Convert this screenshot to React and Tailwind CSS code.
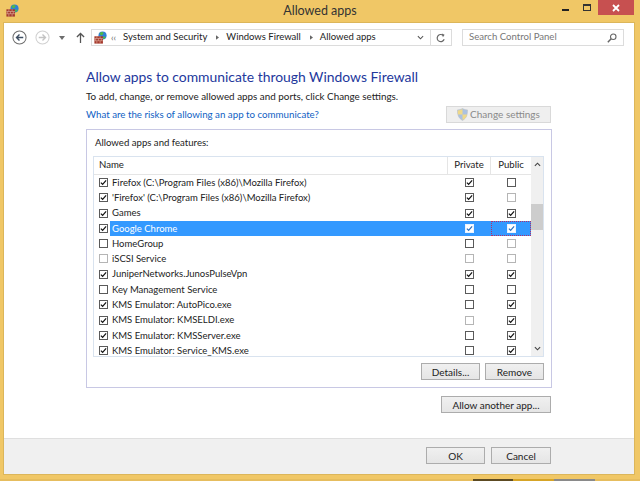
import React from "react";

const rows = [
  { name: "Firefox (C:\\Program Files (x86)\\Mozilla Firefox)", on: true, priv: true, pub: false },
  { name: "'Firefox' (C:\\Program Files (x86)\\Mozilla Firefox)", on: true, priv: true, pub: false, pubDim: true },
  { name: "Games", on: true, priv: true, pub: true },
  { name: "Google Chrome", on: true, priv: true, pub: true, selected: true },
  { name: "HomeGroup", on: false, priv: false, pub: false, pubDim: true },
  { name: "iSCSI Service", on: false, onDim: true, priv: false, privDim: true, pub: false, pubDim: true },
  { name: "JuniperNetworks.JunosPulseVpn", on: true, priv: true, pub: true },
  { name: "Key Management Service", on: false, priv: false, pub: false },
  { name: "KMS Emulator: AutoPico.exe", on: true, priv: false, pub: true },
  { name: "KMS Emulator: KMSELDI.exe", on: true, priv: false, privDim: true, pub: true },
  { name: "KMS Emulator: KMSServer.exe", on: true, priv: false, pub: true },
  { name: "KMS Emulator: Service_KMS.exe", on: true, priv: false, pub: true },
];

const FirewallIcon = ({ className }) => (
  <svg viewBox="0 0 16 16" className={className}>
    <circle cx="10.5" cy="5.5" r="5" fill="#2f80d8" />
    <path d="M7 2.5c2-2 4-1.500 5 0-1 1.500-1 2.500-3 3-1-1-2-1-2-3z" fill="#4fb848" />
    <path d="M11 7c1.500-.5 2.500 0 3.500.5-.5 1-1.500 2-3 2.500z" fill="#4fb848" />
    <rect x="0.500" y="6.500" width="10.500" height="9" fill="#a5392c" />
    <path d="M0.500 9.200h10.500M0.500 12h10.500M3.500 6.500v2.700M7.500 6.500v2.700M2 9.200V12M5.500 9.200V12M9 9.200V12M3.500 12v3.500M7.500 12v3.500" stroke="#e3b9a8" strokeWidth="0.700" fill="none" />
  </svg>
);

const ShieldIcon = () => (
  <svg viewBox="0 0 12 14" className="w-[11px] h-[13px] mr-[2px] opacity-70">
    <path d="M6 0.500c1.500 1 3.500 1.500 5.500 1.500 0 5-1 9-5.500 11.500C1.500 11 0.500 7 0.500 2 2.500 2 4.500 1.500 6 0.500z" fill="#8fb0dc" stroke="#a8a8a8" strokeWidth="0.500" />
    <path d="M6 1v6H1c0-1.500-.2-3-.2-4.500C2.800 2.500 4.500 2 6 1zM6 7h5c-.5 2.500-2 4.500-5 6z" fill="#f0d060" />
  </svg>
);

const Check = ({ on, dim, white, bg }) => (
  <span
    className={`inline-flex items-center justify-center w-[9px] h-[9px] border ${
      dim ? "border-[#b5b5b5]" : white ? "border-[#eaf3ff]" : "border-[#5a5a5a]"
    } ${bg}`}
  >
    {on && (
      <svg viewBox="0 0 8 8" className="w-[7px] h-[7px]">
        <path d="M1 4.200l2 2 4-4.700" fill="none" stroke={white ? "#2a6fc0" : "#111"} strokeWidth="1.400" />
      </svg>
    )}
  </span>
);

const Btn = ({ children, className = "", disabled }) => (
  <button
    className={`h-[17px] flex items-center justify-center border text-[10px] leading-none whitespace-nowrap ${
      disabled
        ? "border-[#d9d9d9] bg-[#efefef] text-[#8a8a8a]"
        : "border-[#acacac] bg-gradient-to-b from-[#f0f0f0] to-[#e5e5e5] text-[#222]"
    } ${className}`}
  >
    {children}
  </button>
);

const App = () => {
  return (
    <div className="w-[640px] h-[481px] overflow-hidden flex flex-col bg-[#f0c766] font-['Lato','Open_Sans',sans-serif] text-[#222]">
      {/* Title bar */}
      <div className="h-[23px] relative flex items-start shrink-0">
        <FirewallIcon className="w-[13px] h-[13px] ml-[6px] mt-[4px]" />
        <div className="absolute left-0 right-0 top-[1px] text-center text-[12.500px] leading-[20px] text-[#333]">
          Allowed apps
        </div>
        <div className="ml-auto mr-[6px] flex items-start">
          <div className="w-[22px] h-[15px] flex items-end justify-center pb-[4px]">
            <div className="w-[7px] h-[2px] bg-[#222]" />
          </div>
          <div className="w-[22px] h-[15px] flex justify-center pt-[4px]">
            <div className="w-[8px] h-[7px] border border-[#333] border-t-2" />
          </div>
          <div className="w-[36px] h-[15px] bg-[#c75050] flex items-center justify-center">
            <svg viewBox="0 0 8 8" className="w-[8px] h-[8px]">
              <path d="M1 1l6 6M7 1l-6 6" stroke="#fff" strokeWidth="1.800" />
            </svg>
          </div>
        </div>
      </div>

      {/* Window body */}
      <div className="ml-[4px] mr-[6px] h-[451px] shrink-0 bg-white flex flex-col outline outline-[#dcb65a]">
        {/* Nav bar */}
        <div className="h-[17px] mt-[6px] flex items-center shrink-0">
          <svg viewBox="0 0 16 16" className="w-[15px] h-[15px] ml-[8px]">
            <circle cx="8" cy="8" r="7" fill="#fff" stroke="#6e6e6e" strokeWidth="1.100" />
            <path d="M12 8H5M8 4.800L4.800 8 8 11.200" fill="none" stroke="#3f4f63" strokeWidth="1.500" />
          </svg>
          <svg viewBox="0 0 16 16" className="w-[15px] h-[15px] ml-[8px]">
            <circle cx="8" cy="8" r="7" fill="#fff" stroke="#d0d0d0" strokeWidth="1.100" />
            <path d="M4 8h7M8 4.800L11.200 8 8 11.200" fill="none" stroke="#c4c4c4" strokeWidth="1.500" />
          </svg>
          <svg viewBox="0 0 6 4" className="w-[6px] h-[4px] ml-[9px]">
            <path d="M0 0h6L3 4z" fill="#6d6d6d" />
          </svg>
          <svg viewBox="0 0 10 12" className="w-[9px] h-[11px] ml-[11px]">
            <path d="M5 12V1.500M1 5.500L5 1.500l4 4" fill="none" stroke="#555" strokeWidth="1.400" />
          </svg>
          {/* Address box */}
          <div className="ml-[6px] w-[361px] h-[17px] border border-[#dcdcdc] flex items-center text-[9.500px]">
            <FirewallIcon className="w-[13px] h-[13px] ml-[2px] shrink-0" />
            <span className="ml-[4px] text-[#666] text-[9px] leading-none">‹‹</span>
            <span className="ml-[7px] whitespace-nowrap">System and Security</span>
            <svg viewBox="0 0 4 6" className="w-[3px] h-[5px] ml-[9px] shrink-0"><path d="M0 0l4 3-4 3z" fill="#666" /></svg>
            <span className="ml-[7px] whitespace-nowrap">Windows Firewall</span>
            <svg viewBox="0 0 4 6" className="w-[3px] h-[5px] ml-[9px] shrink-0"><path d="M0 0l4 3-4 3z" fill="#666" /></svg>
            <span className="ml-[7px] whitespace-nowrap">Allowed apps</span>
            <svg viewBox="0 0 8 5" className="w-[7px] h-[5px] ml-auto mr-[6px] shrink-0">
              <path d="M1 1l3 3 3-3" fill="none" stroke="#555" strokeWidth="1.200" />
            </svg>
            <div className="w-[21px] h-full border-l border-[#dcdcdc] flex items-center justify-center shrink-0">
              <svg viewBox="0 0 12 12" className="w-[10px] h-[10px]">
                <path d="M9.800 7.500A4.300 4.300 0 1 1 8.500 2.800" fill="none" stroke="#666" strokeWidth="1.400" />
                <path d="M7 0.500l3.300 1.500-2 3z" fill="#666" />
              </svg>
            </div>
          </div>
          {/* Search box */}
          <div className="ml-[10px] w-[162px] h-[17px] border border-[#dcdcdc] flex items-center text-[9.600px] text-[#777] pl-[6px]">
            <span>Search Control Panel</span>
            <svg viewBox="0 0 12 12" className="w-[10px] h-[10px] ml-auto mr-[6px]">
              <circle cx="7.500" cy="4.500" r="3.300" fill="none" stroke="#666" strokeWidth="1.300" />
              <path d="M5 7l-4 4" stroke="#666" strokeWidth="1.800" />
            </svg>
          </div>
        </div>

        {/* Content */}
        <div className="ml-[82px] w-[466px] flex-1 flex flex-col">
          <div className="mt-[21px] text-[13.900px] leading-[20px] text-[#23389c]">
            Allow apps to communicate through Windows Firewall
          </div>
          <div className="mt-[1px] text-[9.850px] leading-[16px]">
            To add, change, or remove allowed apps and ports, click Change settings.
          </div>
          <div className="mt-[2px] h-[17px] flex items-center justify-between">
            <span className="text-[9.730px] text-[#0f5fc4]">What are the risks of allowing an app to communicate?</span>
            <Btn disabled className="w-[105px] mr-[1px] -mt-[1px]">
              <ShieldIcon />
              Change settings
            </Btn>
          </div>

          {/* Group box */}
          <div className="mt-[6px] h-[259px] border border-[#c8c8e4] flex flex-col px-[6px]">
            <div className="mt-[5px] h-[17px] text-[9.600px] leading-[16px] pl-[2px]">Allowed apps and features:</div>
            <div className="mt-[4px] w-[451px] h-[201px] border border-[#d9e3ef] flex overflow-hidden">
              {/* List */}
              <div className="w-[437px] flex flex-col">
                <div className="h-[18px] shrink-0 flex items-center text-[9.600px] border-b border-[#e5e5e5]">
                  <div className="w-[353px] pl-[5px]">Name</div>
                  <div className="w-[43px] border-l border-[#e5e5e5] h-full flex items-center justify-center">Private</div>
                  <div className="w-[41px] border-l border-[#e5e5e5] h-full flex items-center justify-center">Public</div>
                </div>
                {rows.map((row) => (
                  <div key={row.name} className="h-[15.270px] shrink-0 flex items-center text-[9.500px] leading-none">
                    <div className="w-[16px] shrink-0 flex justify-center pl-[3px]">
                      <Check on={row.on} dim={row.onDim} />
                    </div>
                    <div className={`h-full flex-1 flex items-center ${row.selected ? "bg-[#3399ff]" : ""}`}>
                      <div className={`w-[338px] pl-[2px] whitespace-nowrap ${row.selected ? "text-white" : ""}`}>{row.name}</div>
                      <div className="w-[43px] flex justify-center">
                        <Check on={row.priv} dim={row.privDim} white={row.selected} bg={row.selected ? "bg-white" : ""} />
                      </div>
                      <div className={`w-[40px] h-full flex items-center justify-center ${row.selected ? "border border-dotted border-[#b0306a]" : ""}`}>
                        <Check on={row.pub} dim={row.pubDim} white={row.selected} bg={row.selected ? "bg-white" : ""} />
                      </div>
                    </div>
                  </div>
                ))}
              </div>
              {/* Scrollbar */}
              <div className="w-[13px] bg-[#f0f0f0] flex flex-col items-center">
                <svg viewBox="0 0 8 5" className="w-[7px] h-[5px] mt-[5px]">
                  <path d="M1 4l3-3 3 3" fill="none" stroke="#444" strokeWidth="1.300" />
                </svg>
                <div className="w-full h-[26px] bg-[#cdcdcd] mt-[37px]" />
                <svg viewBox="0 0 8 5" className="w-[7px] h-[5px] mt-auto mb-[5px]">
                  <path d="M1 1l3 3 3-3" fill="none" stroke="#444" strokeWidth="1.300" />
                </svg>
              </div>
            </div>
            <div className="mt-[6px] w-[451px] flex justify-end gap-[5px]">
              <Btn className="w-[59px]">Details...</Btn>
              <Btn className="w-[59px]">Remove</Btn>
            </div>
          </div>

          <div className="mt-[8px] flex justify-end pr-[1px]">
            <Btn className="w-[110px]">Allow another app...</Btn>
          </div>
        </div>

        {/* Footer */}
        <div className="h-[36px] shrink-0 bg-[#f0f0f0] border-t border-[#dfdfdf] flex items-start justify-end gap-[6px] pt-[8px] pr-[83px]">
          <Btn className="w-[59px]">OK</Btn>
          <Btn className="w-[60px]">Cancel</Btn>
        </div>
      </div>

      {/* Taskbar sliver showing under the window */}
      <div className="mt-[5px] h-[2px] shrink-0 flex bg-[#e6bd5e]">
        <div className="ml-[473px] w-[40px] bg-[#5c4a22]" />
        <div className="w-[41px] bg-[#d6a426]" />
        <div className="w-[41px] bg-[#8a8a8a]" />
      </div>
    </div>
  );
};

export default App;
